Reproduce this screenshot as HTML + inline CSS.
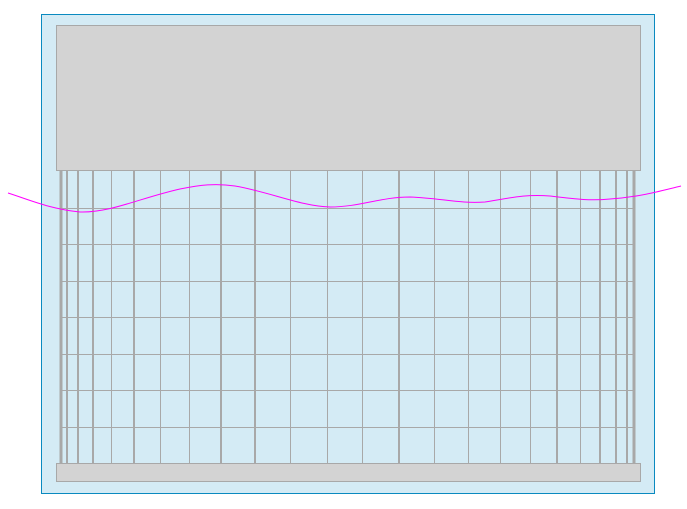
<!DOCTYPE html>
<html><head><style>
html,body{margin:0;padding:0;background:#fff;width:687px;height:509px;overflow:hidden}
</style></head><body>
<svg width="687" height="509" xmlns="http://www.w3.org/2000/svg" shape-rendering="crispEdges">
<rect x="41.5" y="14.5" width="613" height="479" fill="#d4ebf5" stroke="#0a8ac0" stroke-width="1"/>
<g stroke="#a8a8a8" stroke-width="1">
<line x1="62" y1="208.5" x2="634" y2="208.5"/>
<line x1="62" y1="244.5" x2="634" y2="244.5"/>
<line x1="62" y1="281.5" x2="634" y2="281.5"/>
<line x1="62" y1="317.5" x2="634" y2="317.5"/>
<line x1="62" y1="354.5" x2="634" y2="354.5"/>
<line x1="62" y1="390.5" x2="634" y2="390.5"/>
<line x1="62" y1="427.5" x2="634" y2="427.5"/>
</g>
<g stroke="#a8a8a8">
<line x1="61" y1="171" x2="61" y2="463" stroke-width="3"/>
<line x1="67" y1="171" x2="67" y2="463" stroke-width="2"/>
<line x1="78" y1="171" x2="78" y2="463" stroke-width="2"/>
<line x1="93" y1="171" x2="93" y2="463" stroke-width="2"/>
<line x1="111.5" y1="171" x2="111.5" y2="463" stroke-width="1"/>
<line x1="134" y1="171" x2="134" y2="463" stroke-width="2"/>
<line x1="160.5" y1="171" x2="160.5" y2="463" stroke-width="1"/>
<line x1="189.5" y1="171" x2="189.5" y2="463" stroke-width="1"/>
<line x1="221" y1="171" x2="221" y2="463" stroke-width="2"/>
<line x1="255" y1="171" x2="255" y2="463" stroke-width="2"/>
<line x1="290.5" y1="171" x2="290.5" y2="463" stroke-width="1"/>
<line x1="327.5" y1="171" x2="327.5" y2="463" stroke-width="1"/>
<line x1="362.5" y1="171" x2="362.5" y2="463" stroke-width="1"/>
<line x1="399" y1="171" x2="399" y2="463" stroke-width="2"/>
<line x1="434.5" y1="171" x2="434.5" y2="463" stroke-width="1"/>
<line x1="468.5" y1="171" x2="468.5" y2="463" stroke-width="1"/>
<line x1="500.5" y1="171" x2="500.5" y2="463" stroke-width="1"/>
<line x1="530.5" y1="171" x2="530.5" y2="463" stroke-width="1"/>
<line x1="557" y1="171" x2="557" y2="463" stroke-width="2"/>
<line x1="580.5" y1="171" x2="580.5" y2="463" stroke-width="1"/>
<line x1="600" y1="171" x2="600" y2="463" stroke-width="2"/>
<line x1="616" y1="171" x2="616" y2="463" stroke-width="2"/>
<line x1="627" y1="171" x2="627" y2="463" stroke-width="2"/>
<line x1="634" y1="171" x2="634" y2="463" stroke-width="3"/>
</g>
<rect x="56.5" y="25.5" width="584" height="145" fill="#d3d3d3" stroke="#a8a8a8"/>
<rect x="56.5" y="463.5" width="584" height="18" fill="#d3d3d3" stroke="#a8a8a8"/>
<path shape-rendering="auto" fill="none" stroke="#ff00ff" stroke-width="1" d="M8,193 C30,200 50,209 80,212 C110,213 140,198 180,189 C200,185 215,183 235,186 C270,192 300,206 330,207 C360,207 380,197 410,197 C440,198 460,204 485,202 C510,198 525,194 550,196 C575,199 590,201 610,199 C640,197 660,191 681,186"/>
</svg>
</body></html>
